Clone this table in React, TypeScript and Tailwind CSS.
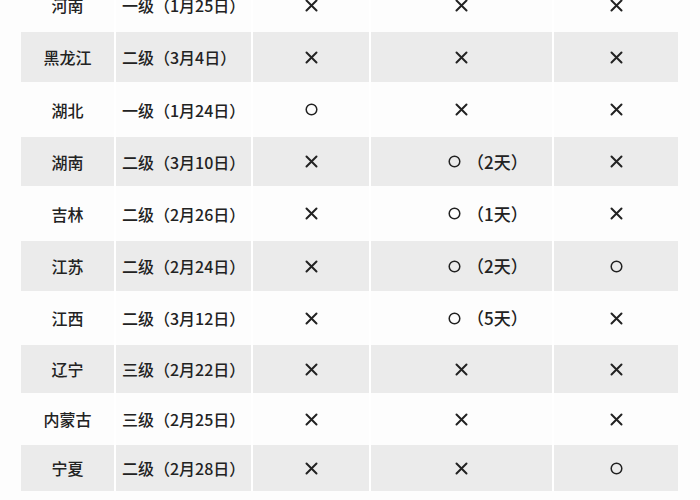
import React from 'react';

type Mark = { sym: 'x' | 'o'; note?: string };

interface Row {
  province: string;
  level: string;
  a: Mark;
  b: Mark;
  c: Mark;
}

const X: Mark = { sym: 'x' };
const O: Mark = { sym: 'o' };

const rows: Row[] = [
  { province: '河南', level: '一级（1月25日）', a: X, b: X, c: X },
  { province: '黑龙江', level: '二级（3月4日）', a: X, b: X, c: X },
  { province: '湖北', level: '一级（1月24日）', a: O, b: X, c: X },
  { province: '湖南', level: '二级（3月10日）', a: X, b: { sym: 'o', note: '（2天）' }, c: X },
  { province: '吉林', level: '二级（2月26日）', a: X, b: { sym: 'o', note: '（1天）' }, c: X },
  { province: '江苏', level: '二级（2月24日）', a: X, b: { sym: 'o', note: '（2天）' }, c: O },
  { province: '江西', level: '二级（3月12日）', a: X, b: { sym: 'o', note: '（5天）' }, c: X },
  { province: '辽宁', level: '三级（2月22日）', a: X, b: X, c: X },
  { province: '内蒙古', level: '三级（2月25日）', a: X, b: X, c: X },
  { province: '宁夏', level: '二级（2月28日）', a: X, b: X, c: O },
];

// measured row heights, white / gray alternating
const heights = ['h-[54px]', 'h-[50px]', 'h-[55px]', 'h-[49px]', 'h-[55px]', 'h-[50px]', 'h-[54px]', 'h-[48px]', 'h-[52px]', 'h-[46px]'];

const Symbol = ({ sym }: { sym: 'x' | 'o' }) =>
  sym === 'x' ? (
    <svg width="13" height="13" viewBox="0 0 13 13" className="shrink-0">
      <path d="M1.5 1.5 L11.5 11.5 M11.5 1.5 L1.5 11.5" stroke="#222" strokeWidth="2" strokeLinecap="round" />
    </svg>
  ) : (
    <svg width="13" height="13" viewBox="0 0 13 13" className="shrink-0">
      <circle cx="6.5" cy="6.5" r="5.3" fill="none" stroke="#222" strokeWidth="1.5" />
    </svg>
  );

const MarkCell = ({ mark, bg }: { mark: Mark; bg: string }) => (
  <div className={`${bg} flex items-center ${mark.note ? 'justify-start pl-[77px]' : 'justify-center'}`}>
    <Symbol sym={mark.sym} />
    {mark.note && <span className="ml-[6px] text-[17px] font-medium text-[#222]">{mark.note}</span>}
  </div>
);

export default function App() {
  return (
    <div
      className="w-[700px] h-[500px] overflow-hidden bg-[#fdfdfd]"
      style={{ fontFamily: '"Noto Sans CJK SC", "Noto Sans", sans-serif' }}
    >
      <div className="-mt-[22px] ml-[21px] w-[657px] flex flex-col">
        {rows.map((r, i) => {
          const bg = i % 2 === 1 ? 'bg-[#ebebeb]' : 'bg-[#fdfdfd]';
          return (
            <div
              key={r.province}
              className={`${heights[i]} grid grid-cols-[93px_135px_116px_181px_124px] gap-x-[2px] bg-white`}
            >
              <div className={`${bg} flex items-center justify-center text-[16px] font-medium text-[#222]`}>{r.province}</div>
              <div className={`${bg} flex items-center pl-[6px] text-[16px] font-medium text-[#222] whitespace-nowrap`}>{r.level}</div>
              <MarkCell mark={r.a} bg={bg} />
              <MarkCell mark={r.b} bg={bg} />
              <MarkCell mark={r.c} bg={bg} />
            </div>
          );
        })}
      </div>
    </div>
  );
}
